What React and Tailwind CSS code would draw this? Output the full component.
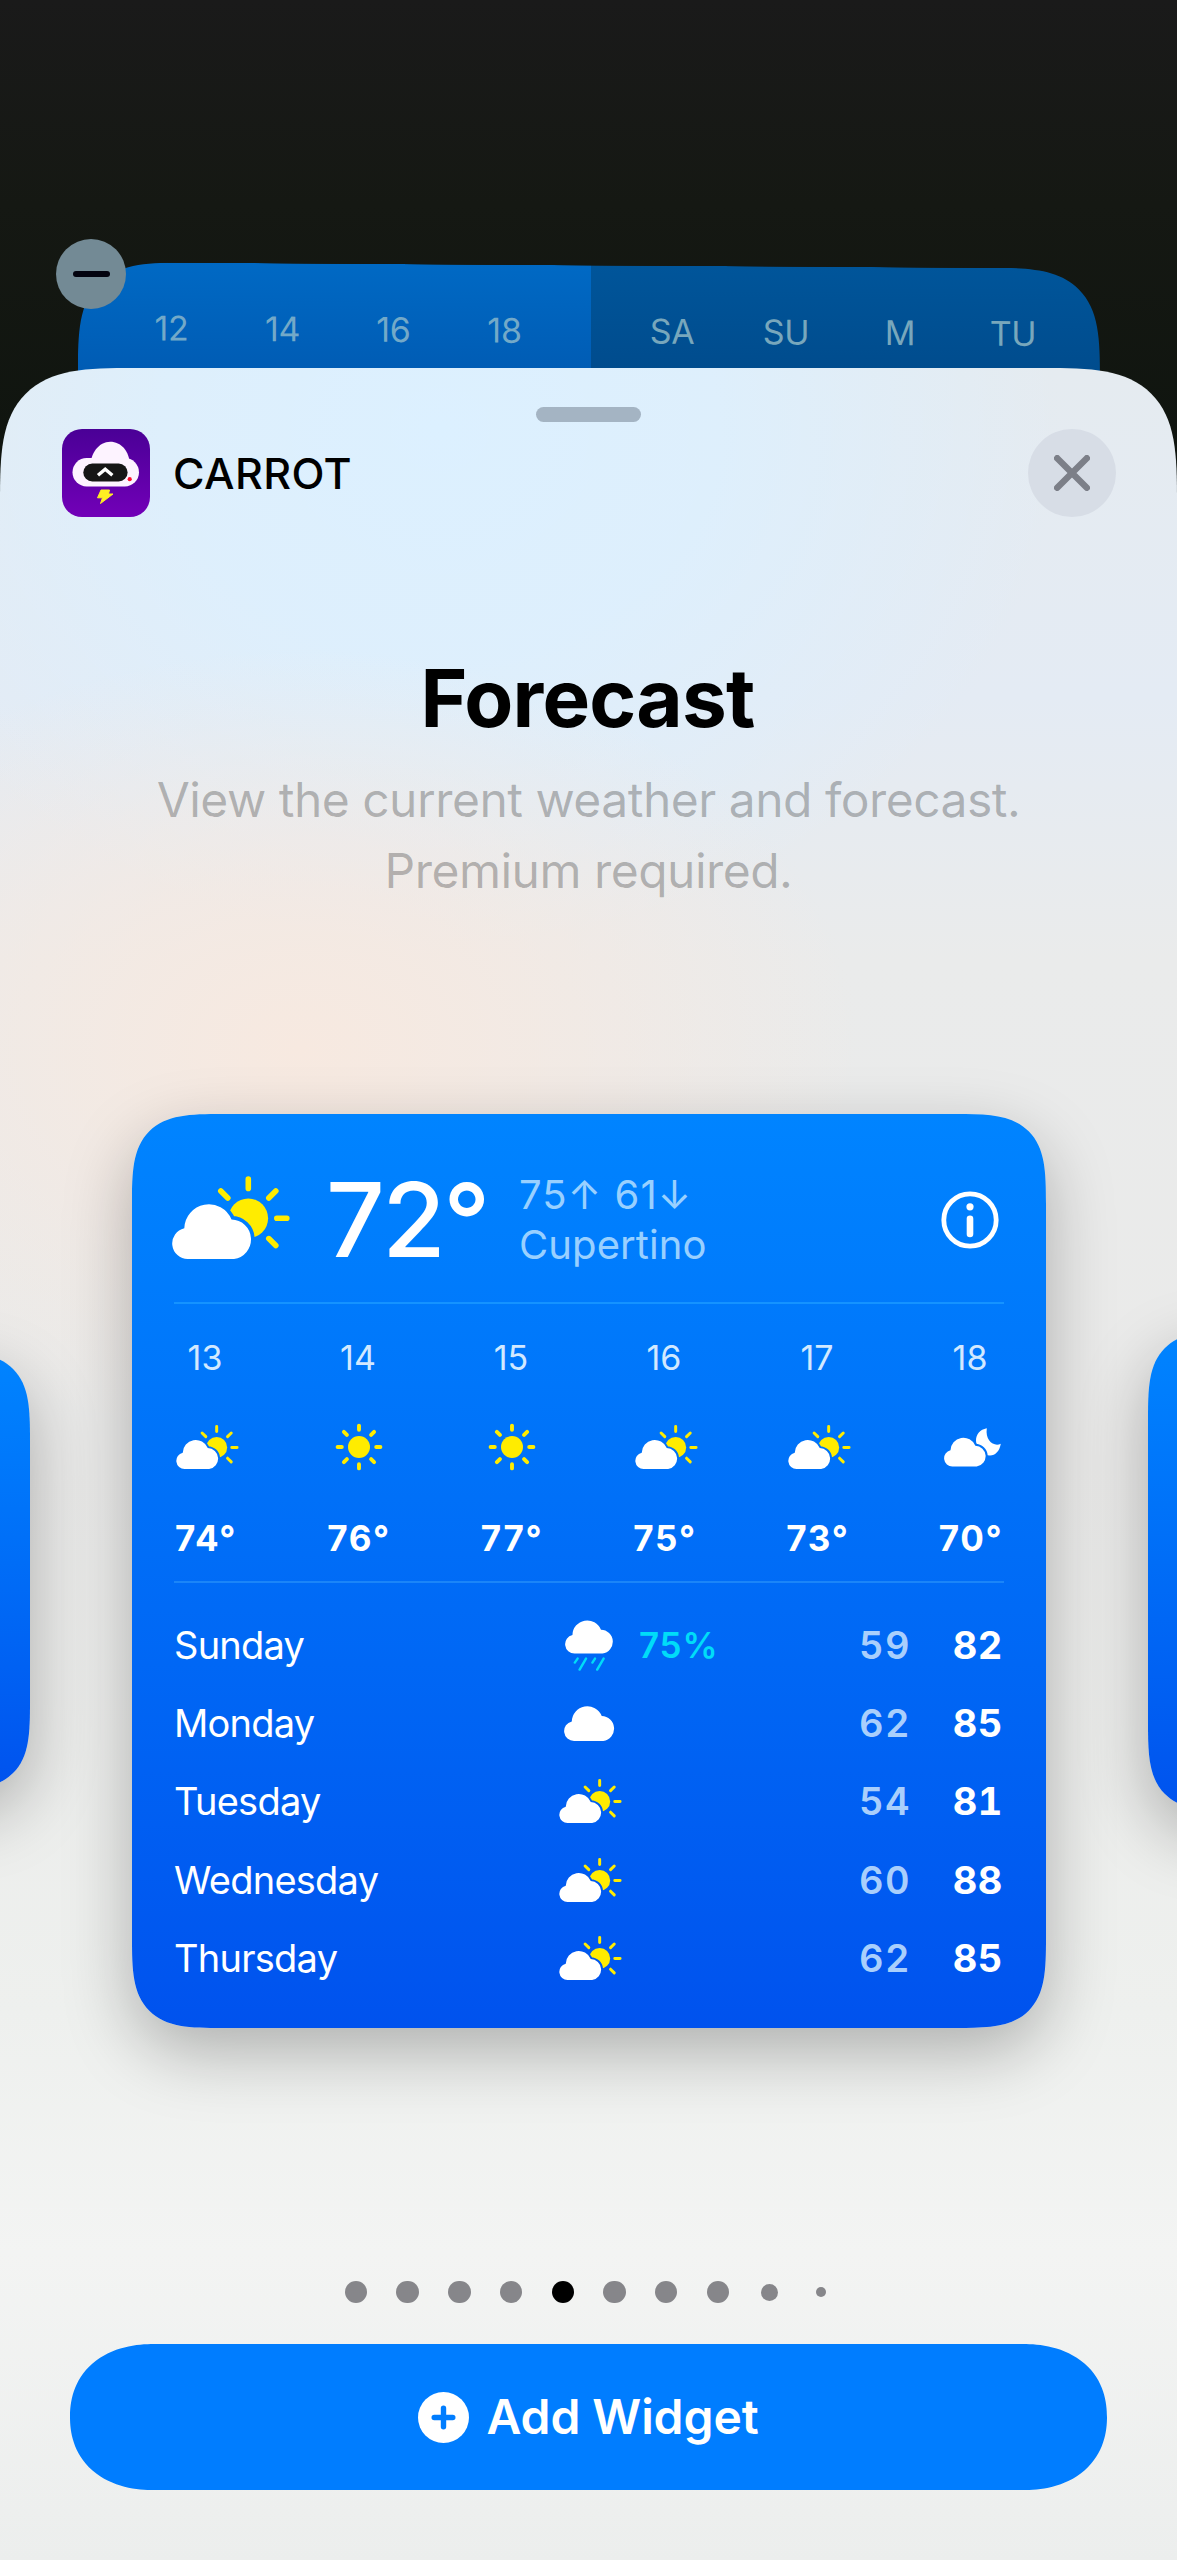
import React from 'react';
import clsx from 'clsx';

const hourly = [
  { hour: '13', icon: 'partly', temp: '74°' },
  { hour: '14', icon: 'sun', temp: '76°' },
  { hour: '15', icon: 'sun', temp: '77°' },
  { hour: '16', icon: 'partly', temp: '75°' },
  { hour: '17', icon: 'partly', temp: '73°' },
  { hour: '18', icon: 'night', temp: '70°' },
];

const daily = [
  { day: 'Sunday', icon: 'rain', chance: '75%', low: 59, high: 82 },
  { day: 'Monday', icon: 'cloud', low: 62, high: 85 },
  { day: 'Tuesday', icon: 'partly', low: 54, high: 81 },
  { day: 'Wednesday', icon: 'partly', low: 60, high: 88 },
  { day: 'Thursday', icon: 'partly', low: 62, high: 85 },
];

const dots = ['md', 'md', 'md', 'md', 'active', 'md', 'md', 'md', 'sm', 'xs'];

const CLOUD =
  'M15.9 83A15.6 15.6 0 0 1 12.3 52.2A24.5 24.5 0 0 1 59.5 43.6A19.8 19.8 0 0 1 62 83Z';

const PartlyIcon = ({ id, className }) => (
  <svg viewBox="0 0 118 83" className={className}>
    <mask id={id}>
      <rect width="118" height="83" fill="white" />
      <path d={CLOUD} fill="black" stroke="black" strokeWidth="7.5" />
    </mask>
    <circle cx="76.3" cy="42.3" r="19.8" fill="#ffec00" mask={`url(#${id})`} />
    <g stroke="#ffec00" strokeWidth="5.6" strokeLinecap="round">
      <path d="M76.3 3V12.4M104.8 42.3H114.8M96.8 22L103.8 15M96.8 62.6L103.8 69.6M55.8 22L48.8 15" />
    </g>
    <path d={CLOUD} fill="white" />
  </svg>
);

const SunIcon = () => (
  <svg viewBox="0 0 48 48" className="w-[48px] h-[48px]">
    <circle cx="24" cy="24" r="11" fill="#ffec00" />
    <path
      d="M24 2.6V6.8M24 41.2V45.4M2.6 24H6.8M41.2 24H45.4M8.9 8.9L11.9 11.9M36.1 36.1L39.1 39.1M39.1 8.9L36.1 11.9M11.9 36.1L8.9 39.1"
      stroke="#ffec00"
      strokeWidth="3.9"
      strokeLinecap="round"
    />
  </svg>
);

const NightIcon = () => (
  <svg viewBox="0 0 57 39" className="w-[57px] h-[39px]">
    <mask id="night">
      <rect width="57" height="39" fill="white" />
      <g transform="translate(0 -5.2) scale(.527)">
        <path d={CLOUD} fill="black" stroke="black" strokeWidth="8" />
      </g>
    </mask>
    <path
      d="M42.8 .3C36 1.6 32 6.5 32 12.5C32 21 38 27.6 46 27.6C51.4 27.6 55.6 23 56.8 15.8C50 19 41 13 42.8 .3Z"
      fill="white"
      mask="url(#night)"
    />
    <g transform="translate(0 -5.2) scale(.527)">
      <path d={CLOUD} fill="white" />
    </g>
  </svg>
);

const CloudIcon = () => (
  <svg viewBox="0 28 82 55" className="w-[52px] h-[35px]">
    <path d={CLOUD} fill="white" />
  </svg>
);

const RainIcon = () => (
  <svg viewBox="0 0 50 51" className="w-[50px] h-[51px]">
    <g transform="translate(0 -16.7) scale(.605)">
      <path d={CLOUD} fill="white" />
    </g>
    <path
      d="M12.6 38.6L9.8 42.6M21 38.6L14.6 49.6M30 38.6L27.4 42.6M38.6 38.6L32.2 49.6"
      stroke="#00dcf8"
      strokeWidth="2.4"
      strokeLinecap="round"
    />
  </svg>
);

const WeatherIcon = ({ name, id }) => {
  if (name === 'sun') return <SunIcon />;
  if (name === 'night') return <NightIcon />;
  if (name === 'cloud') return <CloudIcon />;
  if (name === 'rain') return <RainIcon />;
  return <PartlyIcon id={id} className="w-[63px] h-[44px]" />;
};

const AppIcon = () => (
  <svg viewBox="0 0 88 88" className="w-[88px] h-[88px]">
    <defs>
      <linearGradient id="purple" x1="0" y1="0" x2="0" y2="1">
        <stop offset="0" stopColor="#4a0096" />
        <stop offset="1" stopColor="#7200b8" />
      </linearGradient>
    </defs>
    <rect width="88" height="88" rx="20" fill="url(#purple)" />
    <rect x="10.5" y="29" width="66.5" height="28.5" rx="14.2" fill="#fdf3ff" />
    <path d="M28 40C28 24 37 12.8 48.2 12.8C59 12.8 67.5 22 67.8 36Z" fill="#fdf3ff" />
    <rect x="21.3" y="34.5" width="44.3" height="18" rx="9" fill="#161616" />
    <path d="M36 46.3L43.2 40.3L50.4 46.3" fill="none" stroke="white" strokeWidth="3.4" />
    <circle cx="67.7" cy="50.2" r="2.1" fill="#ff1030" />
    <path d="M39 61H47.5L46.5 65H51L38.5 74.5L40.5 68.8H35.5Z" fill="#ffee22" stroke="#ffee22" strokeLinejoin="round" />
  </svg>
);

const HomeWidget = () => (
  <div className="relative ml-[78px] mt-[262px] w-[1022px] h-[130px]">
    <div className="flex h-[190px] origin-top-left skew-y-[0.36deg] rounded-t-[110px] [corner-shape:superellipse(1.7)] overflow-hidden text-[34px] leading-[34px] tracking-[-0.3px]">
      <div className="flex w-[513px] pt-[49px] pl-[38px] bg-linear-to-b from-[#0069c4] from-0% to-[#005bb3] to-60% text-[#73a9c8]">
        <span className="w-[111px] text-center">12</span>
        <span className="w-[111px] text-center">14</span>
        <span className="w-[111px] text-center">16</span>
        <span className="w-[111px] text-center">18</span>
      </div>
      <div className="flex w-[509px] pt-[49px] pl-[24px] bg-linear-to-b from-[#00559a] from-0% to-[#004b8c] to-60% text-[#78a7bc]">
        <span className="w-[114px] text-center">SA</span>
        <span className="w-[114px] text-center">SU</span>
        <span className="w-[114px] text-center">M</span>
        <span className="w-[112px] text-center">TU</span>
      </div>
    </div>
    <div className="absolute -left-[22px] -top-[23px] w-[70px] h-[70px] rounded-full bg-[#738a95] flex items-center justify-center">
      <div className="w-[37px] h-[6px] rounded-full bg-[#03030f]" />
    </div>
  </div>
);

const ForecastCard = () => (
  <section className="shrink-0 w-[914px] h-[914px] px-[42px] rounded-[90px] [corner-shape:superellipse(1.7)] bg-linear-to-b from-[#0084ff] to-[#0052ee] shadow-[0_24px_68px_rgba(0,0,0,0.27)]">
    <div className="flex items-center h-[188px] pt-[23px]">
      <PartlyIcon id="now" className="w-[118px] h-[83px] -mt-[5px] -ml-[2px]" />
      <span className="ml-[36px] w-[193px] text-[103px] leading-[104px] font-medium tracking-[-2.5px] text-white">72°</span>
      <div className="flex-1 text-[40px] leading-[50px] text-[#99d0ff]">
        <p className="whitespace-nowrap tracking-[1.1px]">75↑ 61↓</p>
        <p className="tracking-[0.1px]">Cupertino</p>
      </div>
      <svg viewBox="0 0 58 58" className="w-[58px] h-[58px] mr-[5px]">
        <circle cx="29" cy="29" r="26.2" fill="none" stroke="white" strokeWidth="4.8" />
        <circle cx="29" cy="15.8" r="3.6" fill="white" />
        <path d="M29 27.8V43" stroke="white" strokeWidth="6.6" strokeLinecap="round" />
      </svg>
    </div>
    <div className="h-[2px] bg-[#1593ff]" />

    <div className="flex justify-between h-[277px] -mx-[10px] pt-[37px] pr-[3px]">
      {hourly.map(({ hour, icon, temp }, i) => (
        <div key={hour} className="flex flex-col items-center w-[82px]">
          <span className="text-[34px] leading-[34px] font-[370] text-[#d2e9ff]">{hour}</span>
          <div className={clsx('flex items-center justify-center h-[60px] mt-[42px]', icon === 'sun' ? 'pl-[2px]' : 'pl-[5px]')}>
            <WeatherIcon name={icon} id={`hour-${i}`} />
          </div>
          <span className="mt-[43px] pl-[2px] text-[35px] leading-[36px] font-bold tracking-[1.7px] text-white">{temp}</span>
        </div>
      ))}
    </div>
    <div className="h-[2px] bg-[#1b85f8]" />

    <div className="mt-[23px]">
      {daily.map(({ day, icon, chance, low, high }, i) => (
        <div key={day} className="flex items-center h-[78.2px] text-[38px] leading-[40px]">
          <span className="w-[376px] tracking-[-0.75px] text-white">{day}</span>
          <div className="flex justify-center w-[80px]">
            <WeatherIcon name={icon} id={`day-${i}`} />
          </div>
          <span className="w-[180px] pl-[9px] text-[35px] font-semibold tracking-[0.8px] text-[#00dcf8]">{chance}</span>
          <span className="w-[101px] text-right font-semibold tabular-nums tracking-[1.4px] text-[#a9cffc]">{low}</span>
          <span className="w-[92px] text-right font-bold tabular-nums tracking-[0.6px] text-white">{high}</span>
        </div>
      ))}
    </div>
  </section>
);

const App = () => {
  return (
    <main className="w-[1177px] h-[2560px] overflow-hidden font-['Inter',sans-serif] bg-linear-to-b from-[#1a1a1a] from-0% via-[#151813] via-8% to-[#0e140e] to-20% flex flex-col">
      <HomeWidget />

      <div className="relative -mt-[24px] h-[2192px] shrink-0 overflow-hidden rounded-t-[134px] [corner-shape:superellipse(1.7)] bg-[radial-gradient(ellipse_560px_400px_at_300px_680px,#f7e9e0_0%,rgba(247,233,224,0.65)_40%,rgba(247,233,224,0)_100%),radial-gradient(ellipse_620px_520px_at_440px_60px,#dcf0ff_0%,rgba(220,240,255,0.8)_45%,rgba(220,240,255,0)_100%),linear-gradient(to_bottom,#e5ebf0_0%,#e4ebf4_15%,#eaebeb_27%,#eaeae9_50%,#eef0ee_75%,#f3f4f3_86%,#eceeed_100%)]">
        <div className="mx-auto mt-[39px] w-[105px] h-[15px] rounded-full bg-[#a4b4c3]" />

        <header className="mt-[7px] pl-[62px] pr-[61px] flex items-center">
          <AppIcon />
          <h2 className="ml-[23px] text-[43px] leading-[50px] font-medium tracking-[0.4px] text-black">CARROT</h2>
          <button className="ml-auto w-[88px] h-[88px] rounded-full bg-[#d7dde6] flex items-center justify-center">
            <svg viewBox="0 0 36 36" className="w-[36px] h-[36px]">
              <path d="M3.2 3.2L32.8 32.8M32.8 3.2L3.2 32.8" stroke="#7c7f88" strokeWidth="6.4" strokeLinecap="round" />
            </svg>
          </button>
        </header>

        <h1 className="mt-[136px] pr-[2px] text-center text-[80px] leading-[90px] font-bold tracking-[-0.8px] text-black">Forecast</h1>
        <p className="mt-[21px] text-center text-[48px] leading-[71px] tracking-[-0.52px] text-black/26">
          View the current weather and forecast.
          <br />
          Premium required.
        </p>

        <div className="mt-[208px] -ml-[408px] flex items-center gap-[102px] w-[2034px]">
          <div className="shrink-0 w-[438px] h-[438px] rounded-[88px] [corner-shape:superellipse(1.7)] bg-linear-to-b from-[#0084ff] to-[#0052ee] shadow-[0_24px_68px_rgba(0,0,0,0.27)]" />
          <ForecastCard />
          <div className="shrink-0 w-[480px] h-[480px] rounded-[88px] [corner-shape:superellipse(1.7)] bg-linear-to-b from-[#0084ff] to-[#0052ee] shadow-[0_24px_68px_rgba(0,0,0,0.27)]" />
        </div>

        <div className="mt-[253px] ml-[345px] flex items-center h-[22px]">
          {dots.map((size, i) => (
            <span key={i} className="flex items-center justify-center w-[22px] mr-[29.7px]">
              <span
                className={clsx(
                  'rounded-full shrink-0',
                  size === 'active' ? 'bg-black' : 'bg-[#86868a]',
                  (size === 'md' || size === 'active') && 'w-[22.5px] h-[22.5px]',
                  size === 'sm' && 'w-[17px] h-[17px]',
                  size === 'xs' && 'w-[10px] h-[10px]'
                )}
              />
            </span>
          ))}
        </div>

        <button className="mt-[41px] ml-[70px] w-[1037px] h-[146px] rounded-[84px/73px] [corner-shape:superellipse(1.15)] bg-[#007dff] flex items-center justify-center gap-[17px] text-white">
          <svg viewBox="0 0 51 51" className="w-[51px] h-[51px]">
            <circle cx="25.5" cy="25.5" r="25.5" fill="white" />
            <path d="M25.5 16.2V34.8M16.2 25.5H34.8" stroke="#007dff" strokeWidth="5.4" strokeLinecap="round" />
          </svg>
          <span className="text-[48px] leading-[60px] font-semibold tracking-[-0.1px]">Add Widget</span>
        </button>
      </div>
    </main>
  );
};

export default App;
